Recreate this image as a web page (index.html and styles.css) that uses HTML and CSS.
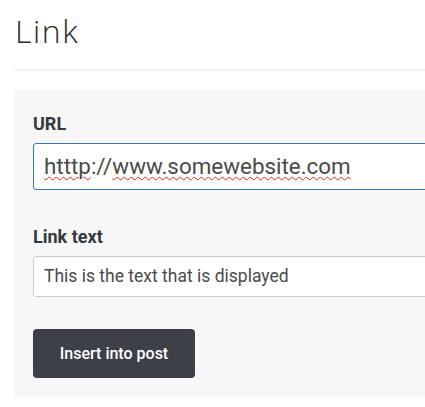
FILE: index.html
```html
<!DOCTYPE html>
<html lang="en">
<head>
    <meta charset="UTF-8">
    <title>Link</title>
    <link rel="stylesheet" href="styles.css">
</head>
<body>

<div class="page">
    <h1 class="page-title">Link</h1>
    <hr class="divider">

    <form class="link-form">
        <div class="field field-url">
            <label class="field-label" for="url">URL</label>
            <div class="field-input field-input-lg is-focused" id="url"><span class="typo">htttp</span>://<span class="typo">www.somewebsite.com</span></div>
        </div>

        <div class="field">
            <label class="field-label" for="linkText">Link text</label>
            <div class="field-input" id="linkText">This is the text that is displayed</div>
        </div>

        <button type="button" class="btn-insert">Insert into post</button>
    </form>
</div>

</body>
</html>
```

FILE: styles.css
```css
body {
    margin: 0;
    background-color: white;
    font-family: Roboto, "Liberation Sans", sans-serif;
    overflow: hidden;
}

.page {
    padding: 0 0 0 14px;
    width: 520px;
}

.page-title {
    font-family: "Open Sans", sans-serif;
    font-weight: 300;
    font-size: 32px;
    letter-spacing: 1.6px;
    line-height: 38px;
    color: #2a2a2a;
    margin: 12px 0 0 1px;
}

.divider {
    border: none;
    border-top: 2px solid #f1f1f1;
    margin: 19px 0 0 0;
}

.link-form {
    background-color: #f7f7f7;
    margin-top: 19px;
    padding: 22px 19px 19px 19px;
}

.field {
    margin-bottom: 32px;
}

.field-url {
    margin-bottom: 35px;
}

.field-label {
    display: block;
    font-size: 18px;
    font-weight: 700;
    color: #343a40;
    line-height: 24px;
    margin-bottom: 7px;
}

.field-input {
    background-color: white;
    border: 1px solid #ccc;
    border-radius: 3px;
    padding: 0 10px;
    height: 39px;
    line-height: 39px;
    font-size: 17.5px;
    color: #4a4a4a;
    white-space: nowrap;
}

.field-input-lg {
    height: 45px;
    line-height: 45px;
    font-size: 22.4px;
}

.field-input.is-focused {
    border-color: #3f77ac;
}

.typo {
    text-decoration: underline wavy #e22;
    text-decoration-thickness: 1px;
    text-underline-offset: 2px;
}

.btn-insert {
    display: block;
    background-color: #3d4047;
    color: white;
    border: none;
    border-radius: 4px;
    width: 162px;
    height: 49px;
    font-family: Roboto, sans-serif;
    font-size: 16px;
    font-weight: 500;
    cursor: pointer;
}
```
